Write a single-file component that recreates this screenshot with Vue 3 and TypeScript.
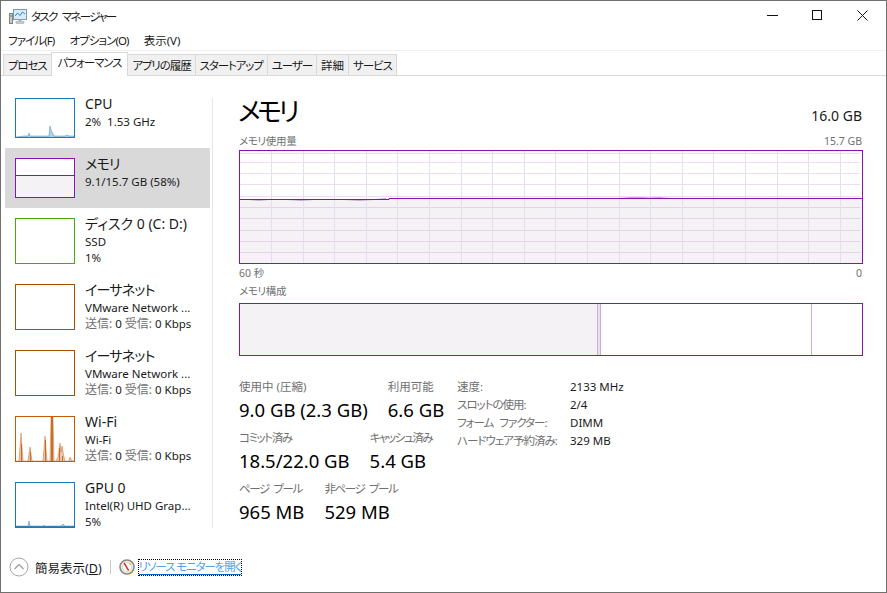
<template>
  <div class="window">
    <header class="titlebar">
      <svg class="app-icon" width="18" height="18" viewBox="0 0 18 18">
        <rect x="0.5" y="6.5" width="3" height="10" fill="#c9cdc4" stroke="#7d8580" />
        <rect x="1.5" y="8" width="1" height="2" fill="#55a03c" />
        <rect x="4.5" y="2.5" width="13" height="10" fill="#d6ecfa" stroke="#7f98ab" />
        <polyline points="6,9 8.5,6 11,8.5 13.5,5 16,7" fill="none" stroke="#2f86c8" stroke-width="1" />
        <rect x="9.5" y="12.5" width="3" height="2" fill="#a8b0b3" />
        <rect x="7" y="14.5" width="8" height="2" fill="#c5cacc" stroke="#9aa2a5" stroke-width="0.5" />
      </svg>
      <span class="title">タスク マネージャー</span>
      <div class="controls">
        <svg width="11" height="11" viewBox="0 0 11 11"><path d="M0 5.5H11" stroke="#111" /></svg>
        <svg width="11" height="11" viewBox="0 0 11 11"><rect x="0.5" y="0.5" width="9" height="9" fill="none" stroke="#111" /></svg>
        <svg width="11" height="11" viewBox="0 0 11 11"><path d="M0.5 0.5L10.5 10.5M10.5 0.5L0.5 10.5" stroke="#111" /></svg>
      </div>
    </header>

    <nav class="menu">
      <span v-for="m in menus" :key="m" :class="{ narrow: hasKana(m) }">{{ m }}</span>
    </nav>

    <div class="tabs">
      <div v-for="t in tabs" :key="t" class="tab" :class="{ active: t === 'パフォーマンス', narrow: hasKana(t) }">{{ t }}</div>
    </div>

    <div class="content">
      <aside class="sidebar">
        <div v-for="item in items" :key="item.name + item.color + item.line1 + item.net + item.tall + item.spark" class="item" :class="{ selected: item.selected, tall: item.tall }">
          <svg class="thumb" :width="60" :height="item.tall ? 46 : 40" :viewBox="`0 0 60 ${item.tall ? 46 : 40}`">
            <rect x="0.5" y="0.5" width="59" :height="(item.tall ? 46 : 40) - 1" fill="#fff" />
            <rect v-if="item.selected" x="1" y="17" width="58" height="22" fill="#f4f2f4" />
            <path v-if="item.selected" d="M1 17.5H59" :stroke="item.color" />
            <polygon v-if="item.spark" :points="item.spark" :fill="item.color" fill-opacity="0.35" />
            <polyline v-if="item.spark" :points="item.spark" fill="none" :stroke="item.color" stroke-opacity="0.6" stroke-width="0.7" />
            <path v-if="item.core" :d="item.core" fill="none" :stroke="item.color" stroke-width="1" stroke-opacity="0.8" />
            <rect x="0.5" y="0.5" width="59" :height="(item.tall ? 46 : 40) - 1" fill="none" :stroke="item.color" />
          </svg>
          <div class="item-text">
            <div class="item-name" :class="{ narrow: isKanaOnly(item.name) }">{{ item.name }}</div>
            <div class="item-sub">{{ item.line1 }}</div>
            <div v-if="item.line2" class="item-sub">{{ item.line2 }}</div>
            <div v-if="item.net" class="item-sub net">
              <span class="muted">送信:</span> 0 <span class="muted">受信:</span> 0 Kbps
            </div>
          </div>
        </div>
      </aside>

      <main class="main">
        <div class="main-head">
          <h1>メモリ</h1>
          <span class="total">16.0 GB</span>
        </div>
        <div class="chart-label"><span class="narrow-sm">メモリ使用量</span><span>15.7 GB</span></div>
        <svg class="chart" width="624" height="114" viewBox="0 0 624 114">
          <rect x="1" y="49" width="622" height="64" fill="#f4f2f4" />
          <path v-for="y in hLines" :key="'h' + y" :d="`M1 ${y}.5H621`" :stroke="y > 48 ? '#e3d2e8' : '#eedcf2'" />
          <path v-for="x in vLines" :key="'v' + x" :d="`M${x}.5 1V113`" stroke="#eadcf0" />
          <polyline points="10,49.5 20,50.5 30,49.5 48,49.5 62,50.5 75,49.5 105,49.5 120,50.5 135,49.5 147,48.5" fill="none" stroke="#c9a6d8" />
          <polyline points="378,48.5 392,47.5 404,47.5 410,48 420,47.5 432,48.5" fill="none" stroke="#c9a6d8" />
          <path d="M1 49.5H150V48.5H623" fill="none" stroke="#8b12ae" />
          <rect x="0.5" y="0.5" width="623" height="113" fill="none" stroke="#8b12ae" />
        </svg>
        <div class="chart-foot"><span>60 秒</span><span>0</span></div>
        <div class="chart-label second"><span class="narrow-sm">メモリ構成</span></div>
        <svg class="chart" width="624" height="53" viewBox="0 0 624 53">
          <rect x="1" y="1" width="358" height="51" fill="#f4f2f4" />
          <path d="M358.5 1V52" stroke="#cbaed6" />
          <rect x="359" y="1" width="2" height="51" fill="#ecdff0" />
          <path d="M361.5 1V52" stroke="#cbaed6" />
          <path d="M572.5 1V52" stroke="#cbaed6" />
          <rect x="0.5" y="0.5" width="623" height="52" fill="none" stroke="#8b12ae" />
        </svg>

        <div class="stats">
          <div class="stats-left">
            <div v-for="(row, i) in statRows" :key="i" class="stat-row">
              <div v-for="s in row" :key="s.label" class="stat">
                <div class="stat-label" :class="{ narrow: hasKana(s.label) }">{{ s.label }}</div>
                <div class="stat-value">{{ s.value }}</div>
              </div>
            </div>
          </div>
          <div class="info">
            <template v-for="r in info" :key="r[0]">
              <span class="muted" :class="{ narrow: hasKana(r[0]) }">{{ r[0] }}</span>
              <span>{{ r[1] }}</span>
            </template>
          </div>
        </div>
      </main>
    </div>

    <footer class="footer">
      <svg width="20" height="20" viewBox="0 0 20 20">
        <circle cx="10" cy="10" r="9" fill="#fff" stroke="#a6a6a6" />
        <polyline points="5.5,12 10,7.5 14.5,12" fill="none" stroke="#9a9a9a" stroke-width="1.2" />
      </svg>
      <span class="fewer">簡易表示(<u>D</u>)</span>
      <span class="sep"></span>
      <svg width="16" height="16" viewBox="0 0 16 16">
        <circle cx="8" cy="8" r="7" fill="#f4f0e8" stroke="#8c8478" stroke-width="1.6" />
        <circle cx="8" cy="8" r="4.6" fill="#fff" stroke="#c9c2b6" stroke-width="0.6" />
        <path d="M5 3.8L9.6 11.5" stroke="#d0342c" stroke-width="1.5" />
        <path d="M10.5 3.8L11.6 6" stroke="#e2a23b" stroke-width="1" />
      </svg>
      <span class="link">リソース モニターを開く</span>
    </footer>
  </div>
</template>

<script setup lang="ts">
interface SideItem {
  name: string;
  line1: string;
  line2?: string;
  net?: boolean;
  color: string;
  tall?: boolean;
  selected?: boolean;
  spark?: string;
  core?: string;
}

interface Stat {
  label: string;
  value: string;
}

// Katakana runs much narrower in the original UI font than in Noto
const hasKana = (s: string) => /[ァ-ヶ]/.test(s);
const isKanaOnly = (s: string) => /^[ァ-ヶー]+$/.test(s);

const menus = ["ファイル(F)", "オプション(O)", "表示(V)"];
const tabs = ["プロセス", "パフォーマンス", "アプリの履歴", "スタートアップ", "ユーザー", "詳細", "サービス"];

const items: SideItem[] = [
  {
    name: "CPU",
    line1: "2%  1.53 GHz",
    color: "#1b7ab8",
    spark: "1,39 9,38 11,38 13,38 14,35 15,38 16,38 27,38 29,38 34,38 35,28 36,32 37,34 39,38 41,38 50,38 52,37 54,38 59,38 59,39",
  },
  { name: "メモリ", line1: "9.1/15.7 GB (58%)", color: "#8b12ae", selected: true },
  { name: "ディスク 0 (C: D:)", line1: "SSD", line2: "1%", color: "#4da60c", tall: true },
  { name: "イーサネット", line1: "VMware Network ...", net: true, color: "#a74f01", tall: true },
  { name: "イーサネット", line1: "VMware Network ...", net: true, color: "#a74f01", tall: true },
  {
    name: "Wi-Fi",
    line1: "Wi-Fi",
    net: true,
    color: "#c05a08",
    tall: true,
    spark: "1,45 4,45 6,17 8,45 13,45 15,31 17,45 28,45 30,20 32,45 35,45 36,1 38,1 39,45 41,45 43,41 44,34 45,27 46,36 47,30 48,36 49,41 50,45 54,45 55,41 57,45 59,45",
    core: "M6.5 28V45M15.5 36V45M30.5 24V45M36.5 1V45M37.5 1V45M44.5 32V45M47.5 40V45",
  },
  {
    name: "GPU 0",
    line1: "Intel(R) UHD Grap...",
    line2: "5%",
    color: "#1b7ab8",
    tall: true,
    spark: "1,44 13,44 14,39 15,44 28,44 29,43 30,44 46,44 48,42 50,44 59,44 59,45 1,45",
    core: "M1 44.5H59",
  },
];

// Grid lines of the big chart, relative to its top left corner
const hLines = [3, 12, 23, 34, 46, 57, 68, 80, 91, 102];
const vLines = Array.from({ length: 19 }, (_, i) => Math.floor(32.5 + i * 31.6));

const statRows: Stat[][] = [
  [
    { label: "使用中 (圧縮)", value: "9.0 GB (2.3 GB)" },
    { label: "利用可能", value: "6.6 GB" },
  ],
  [
    { label: "コミット済み", value: "18.5/22.0 GB" },
    { label: "キャッシュ済み", value: "5.4 GB" },
  ],
  [
    { label: "ページ プール", value: "965 MB" },
    { label: "非ページ プール", value: "529 MB" },
  ],
];

const info = [
  ["速度:", "2133 MHz"],
  ["スロットの使用:", "2/4"],
  ["フォーム ファクター:", "DIMM"],
  ["ハードウェア予約済み:", "329 MB"],
];
</script>

<style>
html,
body {
  margin: 0;
  background: #fff;
}
</style>

<style scoped>
.window {
  box-sizing: border-box;
  width: 887px;
  height: 593px;
  border: 1px solid #707070;
  background: #fff;
  color: #1a1a1a;
  font-family: "Noto Sans", "Noto Sans CJK JP", sans-serif;
  font-size: 12px;
  font-feature-settings: "palt";
  display: flex;
  flex-direction: column;
  overflow: hidden;
}

.titlebar {
  height: 29px;
  display: flex;
  align-items: center;
  padding-left: 8px;
}

.app-icon {
  margin-right: 4px;
}

.title {
  font-size: 11.5px;
  letter-spacing: -1.7px;
  word-spacing: 4px;
}

.controls {
  margin-left: auto;
  display: flex;
  gap: 34px;
  padding-right: 18px;
}

.controls svg {
  display: block;
}

.menu {
  height: 20px;
  display: flex;
  align-items: center;
  gap: 15px;
  padding-left: 7px;
  border-bottom: 1px solid #f0f0f0;
  font-size: 11.5px;
}

.menu .narrow {
  letter-spacing: -0.9px;
}

.tabs {
  height: 24px;
  display: flex;
  align-items: flex-end;
  padding-left: 2px;
  border-bottom: 1px solid #d9d9d9;
  font-size: 11.5px;
}

.tab {
  height: 20px;
  line-height: 21px;
  padding: 0 4px;
  background: #f0f0f0;
  border: 1px solid #d9d9d9;
  border-bottom: none;
  margin-left: -1px;
  white-space: nowrap;
}

.tab.narrow {
  letter-spacing: -1.1px;
}

.tab:first-child {
  margin-left: 0;
}

.tab.active {
  height: 23px;
  background: #fff;
  padding: 0 6px;
  line-height: 20px;
  margin-bottom: -1px;
  z-index: 1;
}

.content {
  flex: 1;
  display: flex;
  min-height: 0;
}

.sidebar {
  width: 212px;
  box-sizing: border-box;
  padding: 12px 3px 0 4px;
  position: relative;
}

.sidebar::after {
  content: "";
  position: absolute;
  right: 0;
  top: 22px;
  height: 430px;
  border-right: 1px solid #e6e6e6;
}

.item {
  height: 60px;
  display: flex;
  padding: 10px 0 0 10px;
  box-sizing: border-box;
}

.item.tall {
  height: 66px;
}

.item.selected {
  background: #d9d9d9;
}

.thumb {
  display: block;
  flex: none;
}

.item-text {
  margin-left: 10px;
  margin-top: -4px;
}

.item-name {
  font-size: 14px;
  line-height: 20px;
}

.item-name.narrow {
  letter-spacing: -0.8px;
}

.item-sub {
  font-size: 11.5px;
  line-height: 16px;
  white-space: pre;
}

.item-sub.net .muted {
  font-size: 12px;
}

.muted {
  color: #707070;
}

.main {
  flex: 1;
  padding: 0 24px 0 26px;
  min-width: 0;
}

.main-head {
  display: flex;
  justify-content: space-between;
  align-items: flex-end;
  height: 55px;
  margin-left: -1px;
}

h1 {
  margin: 0;
  font-size: 26px;
  font-weight: 400;
  line-height: 40px;
  letter-spacing: -3.5px;
  color: #000;
}

.total {
  font-size: 14px;
  line-height: 24px;
  padding-bottom: 3px;
}

.chart-label,
.chart-foot {
  display: flex;
  justify-content: space-between;
  color: #707070;
  font-size: 10.5px;
  line-height: 15px;
}

.chart-label {
  height: 16px;
  margin-top: 3px;
}

.narrow-sm {
  letter-spacing: -0.3px;
}

.chart-foot {
  height: 17px;
  line-height: 19px;
}

.chart-label.second {
  height: 15px;
  margin-top: 3px;
  margin-bottom: 4px;
}

.chart {
  display: block;
}

.stats {
  display: flex;
  margin-top: 22px;
}

.stats-left {
  width: 218px;
  flex: none;
}

.stat-row {
  display: flex;
  gap: 20px;
  height: 51px;
  white-space: nowrap;
}

.stat-label {
  color: #707070;
  font-size: 11.5px;
  line-height: 18px;
}

.stat-label.narrow {
  letter-spacing: -1.4px;
  word-spacing: 3px;
}

.stat-value {
  font-size: 18.5px;
  line-height: 26px;
  margin-top: 1px;
  color: #000;
}

.info {
  display: grid;
  grid-template-columns: 113px auto;
  grid-auto-rows: 18px;
  align-content: start;
  line-height: 18px;
  font-size: 11.5px;
  white-space: nowrap;
}

.info .narrow {
  letter-spacing: -1px;
  word-spacing: 4px;
}

.footer {
  height: 54px;
  flex: none;
  display: flex;
  align-items: center;
  padding: 4px 0 0 8px;
  box-sizing: border-box;
}

.fewer {
  margin-left: 6px;
  font-size: 12.5px;
}

.sep {
  width: 1px;
  height: 14px;
  background: #c8c8c8;
  margin: 0 8px 0 8px;
}

.link {
  margin-left: 4px;
  color: #4fa3ea;
  font-size: 11.5px;
  letter-spacing: -1.1px;
  line-height: 14px;
  border-bottom: 1px solid #0066cc;
  outline: 1px dotted #000;
}
</style>
